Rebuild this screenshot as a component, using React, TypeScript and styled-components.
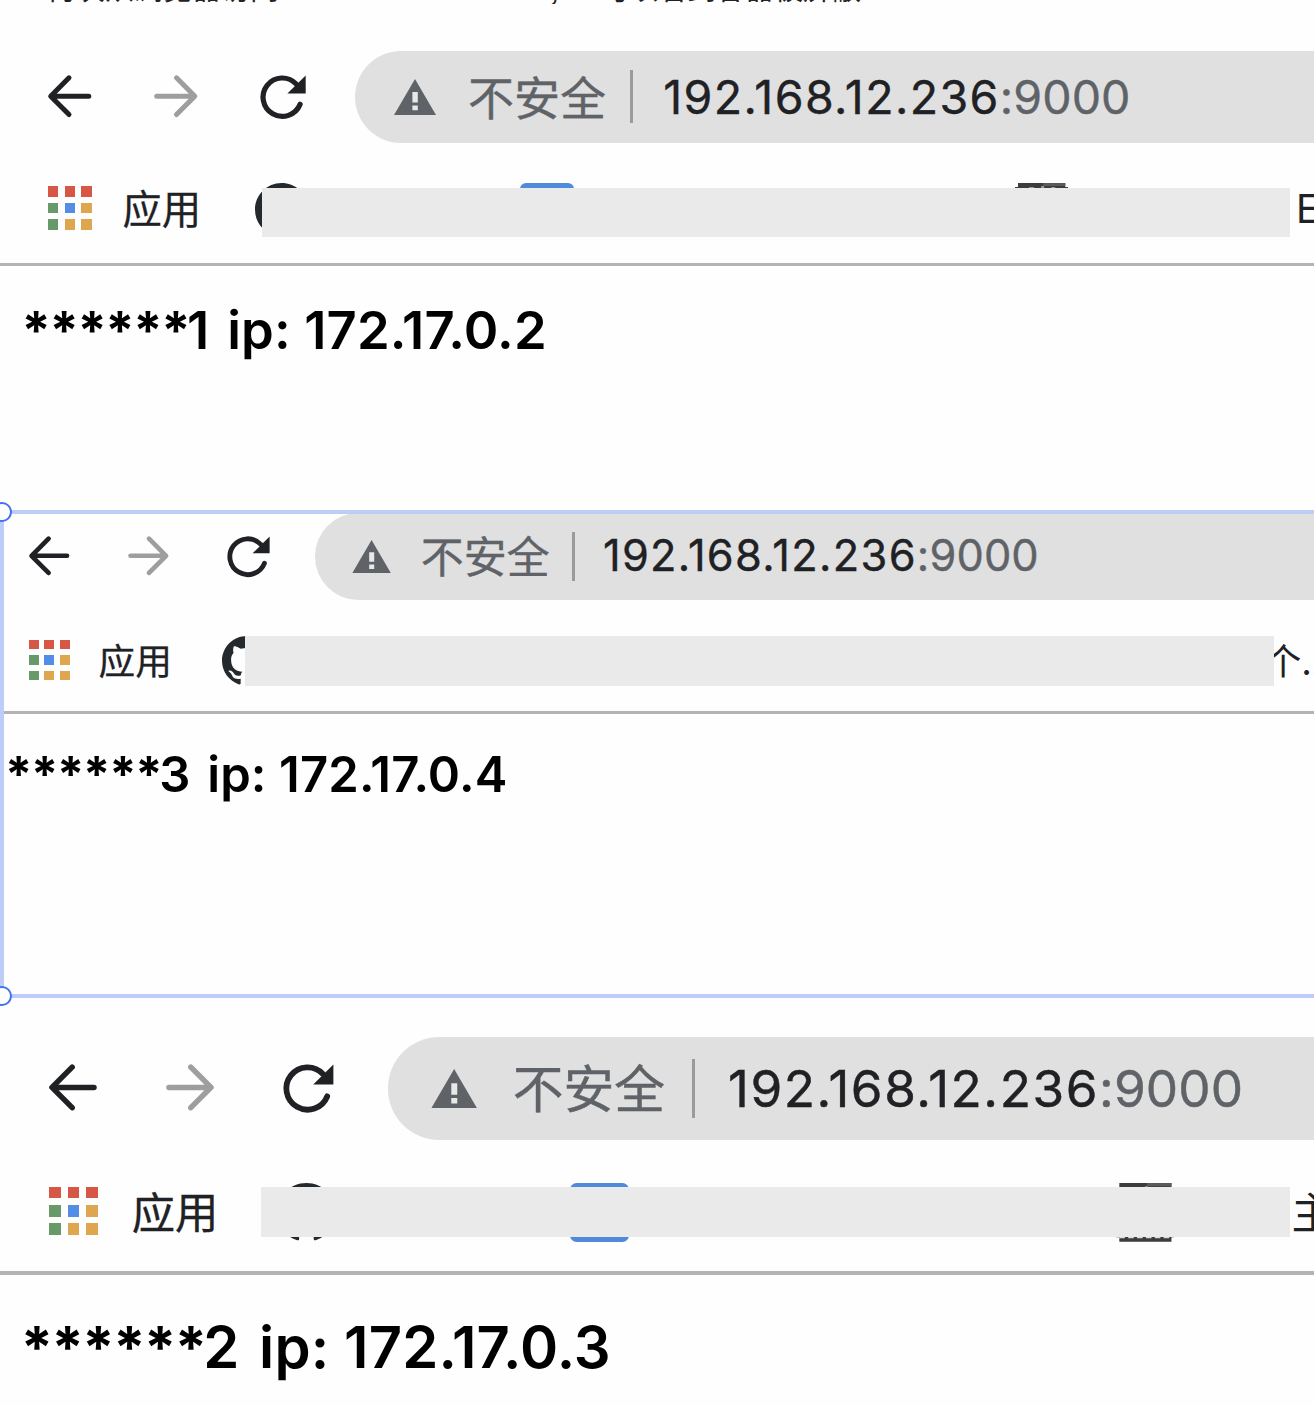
import React from "react";
import styled, { createGlobalStyle } from "styled-components";

const GlobalStyle = createGlobalStyle`
  html, body { margin: 0; padding: 0; background: #fefefe; overflow: hidden; }
  *, *::before, *::after { box-sizing: border-box; }
`;

const latin = `Inter, "Noto Sans CJK SC", sans-serif`;
const cjk = `"Noto Sans CJK SC", sans-serif`;
/* every capture is the same window at another zoom: n is in units of that zoom */
const u = (n: number) => `calc(${n} * var(--u))`;

const Page = styled.main`
  width: 1314px;
  height: 1406px;
  display: flex;
  flex-direction: column;
  overflow: hidden;
  font-family: ${latin};
`;

const Caption = styled.p`
  display: flex;
  align-items: flex-end;
  flex: none;
  height: 4px;
  margin: 0;
  padding: 0 0 1px 47px;
  overflow: hidden;
  white-space: pre;
  font: 400 32px/32px ${cjk};
  color: #222;
`;

const CaptionPart = styled.span<{ $width: number }>`
  flex: none;
  width: ${(p) => p.$width}px;
  font-size: 29px;
  line-height: 32px;
`;

const Capture = styled.section<{ $zoom: number; $height: number; $top: number }>`
  --u: ${(p) => p.$zoom}px;
  position: relative;
  flex: none;
  height: ${(p) => p.$height}px;
  padding-top: ${(p) => p.$top}px;
`;

const Clip = styled.div<{ $shift: number }>`
  display: flex;
  flex-direction: column;
  width: ${(p) => 1314 - p.$shift}px;
  margin-left: ${(p) => p.$shift}px;
`;

const Toolbar = styled.div`
  display: flex;
  align-items: center;
  height: ${u(92.7)};
  padding-left: ${u(48)};
`;

const NavIcon = styled.svg<{ $after: number; $w?: number }>`
  flex: none;
  width: ${(p) => u(p.$w ?? 44)};
  height: ${u(44)};
  margin-right: ${(p) => u(p.$after)};
  overflow: visible;
`;

const AddressBar = styled.div`
  flex: 1;
  display: flex;
  align-items: center;
  height: 100%;
  padding-left: ${u(39.3)};
  border-radius: ${u(46.4)} 0 0 ${u(46.4)};
  background: #e0e0e0;
  white-space: nowrap;
`;

const WarningIcon = styled.svg`
  flex: none;
  width: ${u(42)};
  height: ${u(36)};
`;

const Insecure = styled.span`
  flex: none;
  width: ${u(137)};
  margin: 0 0 ${u(4)} ${u(31.8)};
  font: 400 ${u(46)} / ${u(60)} ${cjk};
  -webkit-text-stroke: ${u(0.4)} #5f6368;
  color: #5f6368;
`;

const Separator = styled.span`
  flex: none;
  width: ${u(3)};
  height: ${u(53)};
  margin: 0 ${u(30)} 0 ${u(25.2)};
  background: #999b9d;
`;

const Url = styled.span`
  font: 400 ${u(46.5)} / ${u(60)} ${latin};
  letter-spacing: ${u(1.4)};
  -webkit-text-stroke: ${u(0.4)} currentColor;
  color: #202124;
`;

const Port = styled.span`
  letter-spacing: ${u(0.1)};
  color: #5f6368;
`;

const Bookmarks = styled.div`
  position: relative;
  display: flex;
  align-items: center;
  height: ${u(53.3)};
  margin-top: ${u(39.5)};
  padding-left: ${u(48)};
`;

const AppsGrid = styled.div`
  flex: none;
  display: grid;
  grid-template-columns: repeat(3, ${u(10.4)});
  gap: ${u(6.2)};
  margin-bottom: ${u(3)};
`;

const AppDot = styled.i<{ $color: string }>`
  height: ${u(10.4)};
  background: ${(p) => p.$color};
`;

const AppsLabel = styled.span`
  flex: none;
  width: ${u(132)};
  margin: 0 0 ${u(4)} ${u(31)};
  font: 400 ${u(39.3)} / ${u(50)} ${cjk};
  -webkit-text-stroke: ${u(0.3)} #202124;
  color: #202124;
  white-space: nowrap;
`;

const GithubIcon = styled.svg`
  flex: none;
  width: ${u(53.3)};
  height: ${u(53.3)};
  color: #24292e;
`;

const BlueTile = styled.i`
  flex: none;
  width: ${u(53.3)};
  height: ${u(53.3)};
  margin-left: ${u(212.5)};
  border-radius: ${u(6)};
  background: #4f8adb;
`;

const DarkTile = styled.svg`
  flex: none;
  width: ${u(53.3)};
  height: ${u(53.3)};
  margin-left: ${u(441)};
`;

const Cover = styled.div<{ $left: number; $width: number; $top: number; $height: number }>`
  position: absolute;
  left: ${(p) => p.$left}px;
  top: ${(p) => p.$top}px;
  width: ${(p) => p.$width}px;
  height: ${(p) => p.$height}px;
  background: #eaeaea;
`;

const CutLabel = styled.span<{ $gap: number; $latin?: boolean }>`
  flex: none;
  margin-left: ${(p) => p.$gap}px;
  margin-bottom: ${(p) => u(p.$latin ? 0 : 4)};
  font: 400 ${u(39)} / ${u(50)} ${(p) => (p.$latin ? latin : cjk)};
  color: #202124;
`;

const Rule = styled.div`
  height: ${u(3.4)};
  margin-top: ${u(26.7)};
  background: #b3b3b3;
`;

const Heading = styled.h1<{ $left: number; $top: number }>`
  display: flex;
  margin: ${(p) => p.$top}px 0 0 ${(p) => p.$left}px;
  font: 600 ${u(52.5)} / ${u(64)} ${latin};
  color: #000;
  white-space: pre;
`;

const Stars = styled.span`
  flex: none;
  width: ${u(165.5)};
  font-weight: 700;
  letter-spacing: ${u(-1.4)};
`;

const HostNumber = styled.span`
  margin-right: ${u(4.6)};
`;

const HeadingText = styled.span`
  letter-spacing: ${u(0.15)};
`;

const Selection = styled.div`
  position: absolute;
  inset: 0 -4px 0 0;
  border: 4px solid #becdf8;
`;

const Handle = styled.i<{ $bottom?: boolean }>`
  position: absolute;
  left: -12px;
  ${(p) => (p.$bottom ? "bottom: -12px;" : "top: -12px;")}
  width: 20px;
  height: 20px;
  border: 2px solid #4371f5;
  border-radius: 50%;
  background: #fff;
`;

const red = "#d65745";
const green = "#679a68";
const blue = "#548de6";
const amber = "#dfa650";
const appColors = [red, red, red, green, blue, amber, green, amber, amber];

function Back() {
  return (
    <NavIcon viewBox="0 0 44 44" $after={62} fill="none" stroke="#202124" strokeWidth="5" strokeLinecap="round" strokeLinejoin="round">
      <path d="M40.8 21.2H4M21 2.8 2.7 21.2 21 39.6" />
    </NavIcon>
  );
}

function Forward() {
  return (
    <NavIcon viewBox="0 0 44 44" $after={62} fill="none" stroke="#9e9e9e" strokeWidth="5" strokeLinecap="round" strokeLinejoin="round">
      <path d="M2.7 21.2h37M22.5 2.8l18.3 18.4L22.5 39.6" />
    </NavIcon>
  );
}

function Reload() {
  return (
    <NavIcon viewBox="0 0 46 44" $after={49} $w={46}>
      <path d="M40.1 29.3A19.2 19.2 0 1 1 36.2 9" fill="none" stroke="#202124" strokeWidth="5.200" strokeLinecap="round" />
      <path d="M45.7.4v18.2H27.4z" fill="#202124" />
    </NavIcon>
  );
}

function Warning() {
  return (
    <WarningIcon viewBox="0 0 42 36">
      <path d="M21 0 42 36H0z" fill="#5f6368" />
      <path d="M18.400 13h5.400v10.400h-5.400zM18.400 26.400h5.400v4.800h-5.400z" fill="#e8e8e8" />
    </WarningIcon>
  );
}

function Github() {
  return (
    <GithubIcon viewBox="0 0 16 16" fill="currentColor">
      <path d="M8 0C3.58 0 0 3.58 0 8c0 3.54 2.29 6.53 5.47 7.59.4.07.55-.17.55-.38 0-.19-.01-.82-.01-1.49-2.01.37-2.53-.49-2.69-.94-.09-.23-.48-.94-.82-1.13-.28-.15-.68-.52-.01-.53.63-.01 1.08.58 1.23.82.72 1.21 1.87.87 2.33.66.07-.52.28-.87.51-1.07-1.78-.2-3.64-.89-3.64-3.95 0-.87.31-1.59.82-2.15-.08-.2-.36-1.02.08-2.12 0 0 .67-.21 2.2.82.64-.18 1.32-.27 2-.27s1.36.09 2 .27c1.53-1.04 2.2-.82 2.2-.82.44 1.1.16 1.92.08 2.12.51.56.82 1.27.82 2.15 0 3.07-1.87 3.75-3.65 3.95.29.25.54.73.54 1.48 0 1.07-.01 1.93-.01 2.2 0 .21.15.46.55.38A8.01 8.01 0 0 0 16 8c0-4.42-3.58-8-8-8z" />
    </GithubIcon>
  );
}

function Machine() {
  return (
    <DarkTile viewBox="0 0 53 53">
      <path d="M3 0h47v4h3v45h-3v4H3v-4H0V4h3z" fill="#3c3c3c" />
      <path d="M28 0h22v3H28z" fill="#5a5a5a" />
      <path d="M14 4h5v2h-5zM26 3h3v3h-3zM36 4h4v2h-4z" fill="#999" />
      <path d="M3 49.200h47" stroke="#ddd" strokeWidth="1.200" strokeDasharray="5 3" />
    </DarkTile>
  );
}

interface CaptureData {
  zoom: number;
  height: number;
  top: number;
  shift: number;
  cover: { left: number; width: number; top: number; height: number };
  cut: { text: string; gap: number; latin?: boolean };
  heading: { host: string; text: string; left: number; top: number };
  selected?: boolean;
}

const captures: CaptureData[] = [
  {
    zoom: 1, height: 506, top: 46.6, shift: 0,
    cover: { left: 262, width: 1028, top: 5.5, height: 49 },
    cut: { text: "E", gap: 228, latin: true },
    heading: { host: "1", text: " ip: 172.17.0.2", left: 21.5, top: 32 },
  },
  {
    zoom: 0.933, height: 488, top: 3.1, shift: -15.8,
    cover: { left: 260.8, width: 1029, top: 0, height: 50 },
    cut: { text: "个...", gap: 284.5 },
    heading: { host: "3", text: " ip: 172.17.0.4", left: 20.7, top: 30.5 },
    selected: true,
  },
  {
    zoom: 1.103, height: 408, top: 39.4, shift: -3.5,
    cover: { left: 264, width: 1029.5, top: 4, height: 50 },
    cut: { text: "主", gap: 117 },
    heading: { host: "2", text: " ip: 172.17.0.3", left: 24.2, top: 36.5 },
  },
];

function BrowserCapture({ data }: { data: CaptureData }) {
  const { cover, cut, heading } = data;
  return (
    <Capture $zoom={data.zoom} $height={data.height} $top={data.top}>
      <Clip $shift={data.shift}>
        <Toolbar>
          <Back />
          <Forward />
          <Reload />
          <AddressBar>
            <Warning />
            <Insecure>不安全</Insecure>
            <Separator />
            <Url>192.168.12.236<Port>:9000</Port></Url>
          </AddressBar>
        </Toolbar>
        <Bookmarks>
          <AppsGrid>
            {appColors.map((color, i) => <AppDot key={i} $color={color} />)}
          </AppsGrid>
          <AppsLabel>应用</AppsLabel>
          <Github />
          <BlueTile />
          <Machine />
          <CutLabel $gap={cut.gap} $latin={cut.latin}>{cut.text}</CutLabel>
          <Cover $left={cover.left} $width={cover.width} $top={cover.top} $height={cover.height} />
        </Bookmarks>
        <Rule />
        <Heading $left={heading.left} $top={heading.top}>
          <Stars>******</Stars>
          <HostNumber>{heading.host}</HostNumber>
          <HeadingText>{heading.text}</HeadingText>
        </Heading>
      </Clip>
      {data.selected && (
        <Selection>
          <Handle />
          <Handle $bottom />
        </Selection>
      )}
    </Capture>
  );
}

export default function App() {
  return (
    <>
      <GlobalStyle />
      <Page>
        <Caption>
          <CaptionPart $width={503}>再次从浏览器访问</CaptionPart>
          <CaptionPart $width={50}>,</CaptionPart>
          <CaptionPart $width={320}>可以看到容器被屏蔽</CaptionPart>
        </Caption>
        {captures.map((data) => <BrowserCapture key={data.heading.host} data={data} />)}
      </Page>
    </>
  );
}
